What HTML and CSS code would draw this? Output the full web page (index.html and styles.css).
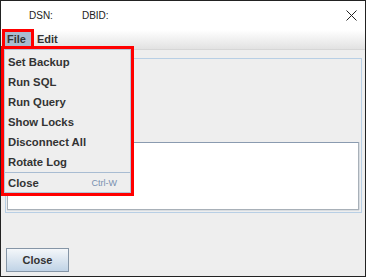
FILE: index.html
```html
<!DOCTYPE html>
<html lang="en">
<head>
    <meta charset="UTF-8">
    <meta name="viewport" content="width=device-width, initial-scale=1.0">
    <title>DSN</title>
    <link rel="stylesheet" href="styles.css">
</head>
<body>
    <!-- window -->
    <div class="window">
        <!-- title bar -->
        <div class="titlebar">
            <span class="title-field">DSN:</span>
            <span class="title-field">DBID:</span>
            <svg class="close-x" width="11" height="11" viewBox="0 0 11 11">
                <path d="M0.5 0.5 L10.5 10.5 M10.5 0.5 L0.5 10.5" stroke="#222" stroke-width="1" fill="none"/>
            </svg>
        </div>
        <!-- menu bar -->
        <div class="menubar">
            <span class="menu-item menu-open">File</span>
            <span class="menu-item">Edit</span>
        </div>
        <!-- main content -->
        <div class="main">
            <div class="panel">
                <div class="panel-top"></div>
                <div class="text-area"></div>
            </div>
            <div class="footer">
                <button class="btn">Close</button>
            </div>
        </div>
        <!-- open File menu -->
        <div class="dropdown">
            <div class="dropdown-inner">
                <div class="row">Set Backup</div>
                <div class="row">Run SQL</div>
                <div class="row">Run Query</div>
                <div class="row">Show Locks</div>
                <div class="row">Disconnect All</div>
                <div class="row">Rotate Log</div>
                <div class="separator"></div>
                <div class="row row-last">Close<span class="shortcut">Ctrl-W</span></div>
            </div>
        </div>
    </div>
</body>
</html>
```

FILE: styles.css
```css
*{
    margin: 0;
    padding: 0;
    box-sizing: border-box;
}
body{
    background-color: #ffffff;
    font-family: "Liberation Sans", Arial, sans-serif;
}
.window{
    position: relative;
    width: 366px;
    height: 277px;
    border: 1px solid #222222;
    background-color: #eeeeee;
    display: flex;
    flex-direction: column;
}
.titlebar{
    height: 29px;
    background-color: #ffffff;
    display: flex;
    align-items: center;
    padding-left: 28px;
    gap: 29px;
    font-size: 10px;
    color: #222222;
}
.close-x{
    margin-left: auto;
    margin-right: 8px;
}
.menubar{
    height: 20px;
    background: linear-gradient(#ffffff, #e2e2e2);
    border-bottom: 1px solid #d6d6d6;
    display: flex;
    align-items: flex-start;
    padding: 2px 0 0 4px;
    gap: 4px;
    font-size: 11px;
    font-weight: bold;
    color: #333333;
}
.menu-item{
    height: 15px;
    line-height: 15px;
    padding: 0 5px 0 2px;
}
/* the open menu title, with the red note box round it */
.menu-open{
    background-color: #a9bcd0;
    outline: 3px solid #ff0000;
}
.main{
    flex: 1;
    display: flex;
    flex-direction: column;
}
.panel{
    margin: 8px 3px 0 4px;
    border: 1px solid #b8cfe5;
    padding-bottom: 2px;
    display: flex;
    flex-direction: column;
}
.panel-top{
    height: 83px;
}
.text-area{
    height: 68px;
    margin: 0 2px 0 1px;
    background-color: #ffffff;
    border: 1px solid #a8b0b8;
    border-top-color: #8a9bb0;
    box-shadow: 1px 0 0 #d8dde2, 0 1px 0 #d8dde2;
}
.footer{
    margin-top: auto;
    padding: 0 0 4px 5px;
}
.btn{
    width: 63px;
    height: 24px;
    border: 1px solid #8595a6;
    background: linear-gradient(#f4f7fa, #c0d3e6);
    font-family: "Liberation Sans", Arial, sans-serif;
    font-size: 11px;
    font-weight: bold;
    color: #333333;
    outline: none;
}
/* dropdown lies over the panel */
.dropdown{
    position: absolute;
    left: 0;
    top: 45px;
    width: 133px;
    height: 150px;
    border: 3px solid #ff0000;
}
.dropdown-inner{
    height: 100%;
    background-color: #eeeeee;
    border: 1px solid #b3c6da;
    padding-top: 2px;
    font-size: 11.3px;
    font-weight: bold;
    color: #333333;
}
.row{
    height: 20px;
    line-height: 20px;
    padding-left: 3px;
    display: flex;
}
.row-last{
    height: 19px;
}
.separator{
    height: 1px;
    background-color: #a8bcd2;
}
.shortcut{
    margin-left: auto;
    padding-right: 13px;
    font-size: 9px;
    font-weight: normal;
    color: #7890b0;
}
```
